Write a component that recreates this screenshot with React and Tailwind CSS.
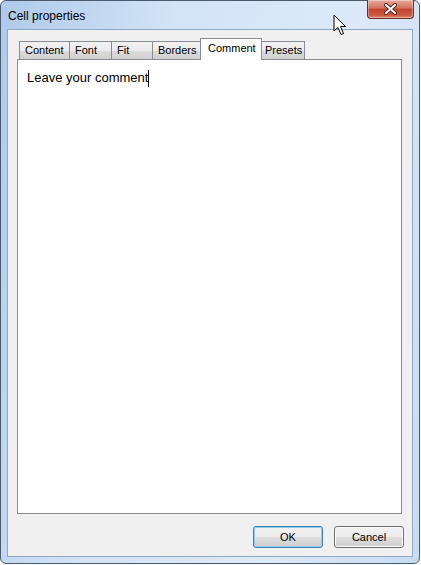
import React from 'react';

const tabs = [
    { label: 'Content', w: 'w-[51px]' },
    { label: 'Font', w: 'w-[42px]' },
    { label: 'Fit', w: 'w-[41px]' },
    { label: 'Borders', w: 'w-[48px]' },
    { label: 'Comment', w: 'w-[62px]', active: true },
    { label: 'Presets', w: 'w-[45px]' },
];

const Tab = ({ label, w, active }) =>
    active ? (
        <div className={`${w} -ml-[1px] -mr-[2px] h-[22px] -mb-px relative z-10 bg-white border border-b-0 border-[#898c95] pl-[7px] pt-[1px] text-[11px] leading-[16px] text-black`}>
            {label}
        </div>
    ) : (
        <div className={`${w} h-[18px] border border-b-0 border-l-0 first:border-l border-[#898c95] bg-[linear-gradient(#f2f2f2,#ebebeb_50%,#dddddd_51%,#cfcfcf)] pl-[5px] text-[11px] leading-[17px] text-black`}>
            {label}
        </div>
    );

const Button = ({ children, isDefault }) => (
    <button
        className={`w-[70px] h-[22px] rounded-[3px] border text-[11px] text-black bg-[linear-gradient(#f2f2f2,#ebebeb_50%,#dddddd_51%,#cfcfcf)] ${
            isDefault
                ? 'border-[#3c7fb1] shadow-[inset_0_0_0_1px_#8fd2f6]'
                : 'border-[#707070] shadow-[inset_0_0_0_1px_#fbfbfb]'
        }`}
    >
        {children}
    </button>
);

const CloseButton = () => (
    <div className="w-[47px] h-[19px] -mt-px mr-[5px] rounded-b-[4px] border border-t-0 border-[#6b2c24] bg-[linear-gradient(#e9a99b,#d3725f_45%,#c1432e_50%,#cc5a42_85%,#e08a6c)] shadow-[inset_0_0_0_1px_rgba(255,255,255,0.35)] flex items-center justify-center">
        <svg width="15" height="12" viewBox="0 0 15 12">
            <path d="M3 2 L12 10 M12 2 L3 10" stroke="#5a2018" strokeWidth="4" strokeLinecap="round" />
            <path d="M3 2 L12 10 M12 2 L3 10" stroke="#ffffff" strokeWidth="2.2" strokeLinecap="round" />
        </svg>
    </div>
);

const Pointer = () => (
    <svg className="absolute left-[333px] top-[14px]" width="14" height="22" viewBox="0 0 14 22">
        <path d="M1 1 L1 17 L5 13.5 L8 20.5 L10.5 19.5 L7.5 12.5 L12.5 12.5 Z" fill="#ffffff" stroke="#000000" strokeWidth="1" strokeLinejoin="round" />
    </svg>
);

export default function App() {
    return (
        <div className="w-[421px] h-[565px] bg-white relative" style={{ fontFamily: '"Liberation Sans", Arial, sans-serif' }}>
            <div className="w-[420px] h-[564px] rounded-[6px] border border-[#4a5a6e] bg-[linear-gradient(100deg,#aecaea,#d3e4f7_35%,#dde9f8_70%,#c6dcf3)] flex flex-col">
                {/* title bar */}
                <div className="h-[28px] flex items-start justify-between">
                    <span className="pl-[7px] pt-[6px] text-[12px] text-black">Cell properties</span>
                    <CloseButton />
                </div>

                {/* client area */}
                <div className="flex-1 mx-[6px] mb-[6px] border border-[#8ea7c3] bg-[#f0f0f0] flex flex-col">
                    <div className="pt-[8px] pl-[9px] pr-[10px] flex flex-col flex-1">
                        <div className="h-[21px] flex items-end pl-[2px]">
                            {tabs.map((t) => (
                                <Tab key={t.label} {...t} />
                            ))}
                        </div>
                        <div className="h-[455px] border border-[#898c95] bg-white pl-[9px] pt-[9px]">
                            <div className="flex items-center text-[13px] leading-[18px] text-black">
                                <span>Leave your comment</span>
                                <span className="w-px h-[17px] bg-black" />
                            </div>
                        </div>
                        <div className="flex justify-end gap-[11px] pt-[12px] -mr-[2px]">
                            <Button isDefault>OK</Button>
                            <Button>Cancel</Button>
                        </div>
                    </div>
                </div>
            </div>
            <Pointer />
        </div>
    );
}
